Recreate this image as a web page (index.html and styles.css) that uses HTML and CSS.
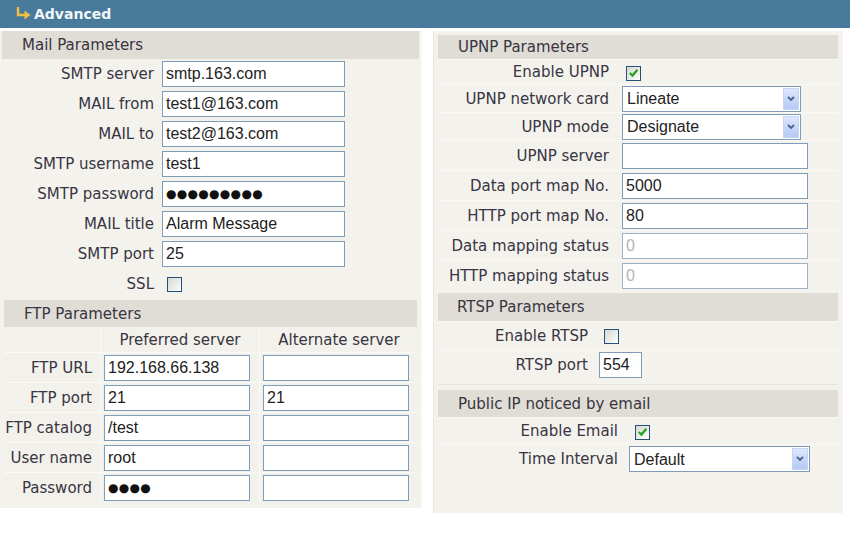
FILE: index.html
```html
<!DOCTYPE html>
<html>
<head>
    <title>Advanced</title>
    <meta charset="UTF-8">
    <link rel="stylesheet" href="styles.css">
</head>
<body>
<div class="topbar">
    <svg class="topbar-arrow" width="17" height="16" viewBox="0 0 17 16">
        <path d="M3 2 V10 H10" fill="none" stroke="#f2bd45" stroke-width="2.4"/>
        <polygon points="9.5,5.5 15.5,10 9.5,14.5" fill="#f2bd45"/>
    </svg>
    <span class="topbar-title">Advanced</span>
</div>

<div class="panels">
    <div class="panel panel-left">
        <div class="sect-head mail-head">Mail Parameters</div>
        <div class="mail-form">
            <label class="lbl">SMTP server</label><input class="txt w183" type="text" value="smtp.163.com">
            <label class="lbl">MAIL from</label><input class="txt w183" type="text" value="test1@163.com">
            <label class="lbl">MAIL to</label><input class="txt w183" type="text" value="test2@163.com">
            <label class="lbl">SMTP username</label><input class="txt w183" type="text" value="test1">
            <label class="lbl">SMTP password</label><input class="txt w183 dots" type="text" value="●●●●●●●●●">
            <label class="lbl">MAIL title</label><input class="txt w183" type="text" value="Alarm Message">
            <label class="lbl">SMTP port</label><input class="txt w183" type="text" value="25">
            <label class="lbl">SSL</label><span class="chk chk-mail"></span>
        </div>

        <div class="box ftp-box">
            <div class="sect-head ftp-head">FTP Parameters</div>
            <div class="ftp-grid">
                <div class="cell"></div>
                <div class="cell cell-head">Preferred server</div>
                <div class="cell cell-head">Alternate server</div>

                <div class="cell cell-lbl">FTP URL</div>
                <div class="cell"><input class="txt w146" type="text" value="192.168.66.138"></div>
                <div class="cell"><input class="txt w146" type="text" value=""></div>

                <div class="cell cell-lbl">FTP port</div>
                <div class="cell"><input class="txt w146" type="text" value="21"></div>
                <div class="cell"><input class="txt w146" type="text" value="21"></div>

                <div class="cell cell-lbl">FTP catalog</div>
                <div class="cell"><input class="txt w146" type="text" value="/test"></div>
                <div class="cell"><input class="txt w146" type="text" value=""></div>

                <div class="cell cell-lbl">User name</div>
                <div class="cell"><input class="txt w146" type="text" value="root"></div>
                <div class="cell"><input class="txt w146" type="text" value=""></div>

                <div class="cell cell-lbl">Password</div>
                <div class="cell"><input class="txt w146 dots" type="text" value="●●●●"></div>
                <div class="cell"><input class="txt w146" type="text" value=""></div>
            </div>
        </div>
    </div>

    <div class="panel panel-right">
        <div class="box upnp-box">
            <div class="sect-head upnp-head">UPNP Parameters</div>
            <div class="row h25"><span class="lbl upnp-lbl">Enable UPNP</span><span class="chk on chk-upnp"><svg width="11" height="10" viewBox="0 0 11 10"><path d="M1.8 5 L4.5 7.6 L9.4 1.8" fill="none" stroke="#22a325" stroke-width="2.3"/></svg></span></div>
            <div class="row h28"><span class="lbl upnp-lbl">UPNP network card</span>
                <span class="sel w179"><select><option>Lineate</option></select><span class="sel-btn"><svg width="8" height="6" viewBox="0 0 8 6"><path d="M1 1 L4 4 L7 1" fill="none" stroke="#4d6185" stroke-width="1.8"/></svg></span></span></div>
            <div class="row h28"><span class="lbl upnp-lbl">UPNP mode</span>
                <span class="sel w179"><select><option>Designate</option></select><span class="sel-btn"><svg width="8" height="6" viewBox="0 0 8 6"><path d="M1 1 L4 4 L7 1" fill="none" stroke="#4d6185" stroke-width="1.8"/></svg></span></span></div>
            <div class="row h30"><span class="lbl upnp-lbl">UPNP server</span><input class="txt w186 ml6" type="text" value=""></div>
            <div class="row h30"><span class="lbl upnp-lbl">Data port map No.</span><input class="txt w186 ml6" type="text" value="5000"></div>
            <div class="row h30"><span class="lbl upnp-lbl">HTTP port map No.</span><input class="txt w186 ml6" type="text" value="80"></div>
            <div class="row h30"><span class="lbl upnp-lbl">Data mapping status</span><input class="txt w186 ml6" type="text" value="0" disabled></div>
            <div class="row h30"><span class="lbl upnp-lbl">HTTP mapping status</span><input class="txt w186 ml6" type="text" value="0" disabled></div>
        </div>

        <div class="box rtsp-box">
            <div class="sect-head rtsp-head">RTSP Parameters</div>
            <div class="row h29"><span class="lbl rtsp-lbl">Enable RTSP</span><span class="chk chk-rtsp"></span></div>
            <div class="row h28"><span class="lbl rtsp-lbl">RTSP port</span><input class="txt w43 ml6" type="text" value="554"></div>
        </div>

        <div class="box ip-box">
            <div class="sect-head ip-head">Public IP noticed by email</div>
            <div class="row h27"><span class="lbl ip-lbl">Enable Email</span><span class="chk on chk-ip"><svg width="11" height="10" viewBox="0 0 11 10"><path d="M1.8 5 L4.5 7.6 L9.4 1.8" fill="none" stroke="#22a325" stroke-width="2.3"/></svg></span></div>
            <div class="row h29"><span class="lbl ip-lbl">Time Interval</span>
                <span class="sel w181 ml7"><select><option>Default</option></select><span class="sel-btn"><svg width="8" height="6" viewBox="0 0 8 6"><path d="M1 1 L4 4 L7 1" fill="none" stroke="#4d6185" stroke-width="1.8"/></svg></span></span></div>
        </div>
    </div>
</div>
</body>
</html>
```

FILE: styles.css
```css
body {
    margin: 0;
    width: 850px;
    background: #ffffff;
    font-family: "DejaVu Sans", Verdana, sans-serif;
    font-size: 15px;
    color: #383542;
}

/* top title bar */
.topbar {
    height: 28px;
    background: #477a9b;
    border-bottom: 3px solid #ffffff;
    display: flex;
    align-items: center;
    padding-left: 15px;
    gap: 2px;
}

.topbar-arrow {
    display: block;
    margin-top: -2px;
}

.topbar-title {
    color: #f3f6f8;
    font-weight: bold;
    font-size: 14px;
}

/* two columns */
.panels {
    display: flex;
    gap: 11px;
    align-items: flex-start;
}

.panel {
    background: #f4f2ed;
    display: flex;
    flex-direction: column;
    box-sizing: border-box;
}

.panel-left {
    width: 422px;
    height: 477px;
    border-right: 1px solid #faf9f6;
}

.panel-right {
    width: 410px;
    height: 482px;
    padding: 4px 5px 4px 4px;
    border-left: 1px solid #e9e6e0;
}

.sect-head {
    background: #e0ddd6;
    box-sizing: border-box;
    padding-left: 20px;
    display: flex;
    align-items: center;
}

.mail-head {
    height: 28px;
    margin: 0 2px;
}

.lbl {
    text-align: right;
    white-space: nowrap;
}

/* text inputs */
.txt {
    box-sizing: border-box;
    height: 26px;
    margin: 0;
    padding: 0 3px;
    border: 1px solid #7f9db9;
    background: #ffffff;
    font-family: "Liberation Sans", Arial, sans-serif;
    font-size: 16px;
    color: #222222;
    outline: none;
}

.txt:disabled {
    color: #b5b5b5;
    background: #ffffff;
    border-color: #9fb2c6;
}

.dots {
    font-family: "DejaVu Sans", sans-serif;
    font-size: 12px;
    letter-spacing: 0.3px;
    color: #111111;
}

.w183 { width: 183px; }
.w146 { width: 146px; }
.w186 { width: 186px; }
.w179 { width: 179px; }
.w181 { width: 181px; }
.w43 { width: 43px; }
.ml6 { margin-left: 6px; }
.ml7 { margin-left: 7px; }

/* checkboxes */
.chk {
    box-sizing: border-box;
    width: 15px;
    height: 15px;
    border: 1px solid #24507a;
    background: linear-gradient(135deg, #d8d8d0 0%, #f2f2ee 70%, #ffffff 100%);
    display: flex;
    align-items: center;
    justify-content: center;
}

.chk-mail { margin-left: 5px; }
.chk-upnp { margin-left: 10px; margin-top: 2px; }
.chk-rtsp { margin-left: 11px; }
.chk-ip { margin-left: 12px; margin-top: 2px; }

/* xp style select */
.sel {
    position: relative;
    display: inline-block;
    box-sizing: border-box;
    height: 26px;
    margin-left: 6px;
    border: 1px solid #7f9db9;
    background: #ffffff;
}

.sel select {
    appearance: none;
    -webkit-appearance: none;
    width: 100%;
    height: 100%;
    border: none;
    margin: 0;
    padding: 0 0 0 4px;
    background: transparent;
    font-family: "Liberation Sans", Arial, sans-serif;
    font-size: 16px;
    color: #222222;
    outline: none;
}

.sel-btn {
    position: absolute;
    top: 1px;
    right: 1px;
    bottom: 1px;
    width: 16px;
    box-sizing: border-box;
    border: 1px solid #c5d5f6;
    background: linear-gradient(180deg, #dde7fe 0%, #c4d4f9 60%, #b6c9f3 100%);
    display: flex;
    align-items: center;
    justify-content: center;
}

/* mail form */
.mail-form {
    display: grid;
    grid-template-columns: 154px 183px;
    grid-auto-rows: 30px;
    column-gap: 8px;
    align-items: center;
}

/* ftp box */
.ftp-box {
    margin: 0 4px;
}

.ftp-head {
    height: 27px;
    margin-top: 1px;
}

.ftp-grid {
    display: grid;
    grid-template-columns: 96px 158px 158px;
    grid-template-rows: 25px 29px 29px 29px 29px 29px;
    gap: 1px;
    background: #fbfaf7;
}

.cell {
    background: #f3f1eb;
    display: flex;
    align-items: center;
    padding-left: 3px;
}

.cell-head {
    justify-content: center;
    padding-left: 0;
}

.cell-lbl {
    justify-content: flex-end;
    padding: 0 8px 0 0;
    white-space: nowrap;
}

/* right panel boxes */
.box {
    display: flex;
    flex-direction: column;
}

.row {
    display: flex;
    align-items: center;
    box-sizing: border-box;
    border-top: 1px solid #faf9f6;
}

.h25 { height: 25px; }
.h27 { height: 27px; }
.h28 { height: 28px; }
.h29 { height: 29px; }
.h30 { height: 30px; }

.upnp-head { height: 24px; }
.upnp-lbl { width: 178px; padding-right: 7px; box-sizing: border-box; }

.rtsp-box {
    margin-top: 3px;
    padding-bottom: 6px;
    border-bottom: 1px solid #e6e3dc;
}

.rtsp-head { height: 28px; padding-left: 19px; }
.rtsp-lbl { width: 155px; padding-right: 5px; box-sizing: border-box; }

.ip-box {
    margin-top: 5px;
    flex: 1;
}

.ip-head { height: 27px; }
.ip-lbl { width: 185px; padding-right: 5px; box-sizing: border-box; }
```
